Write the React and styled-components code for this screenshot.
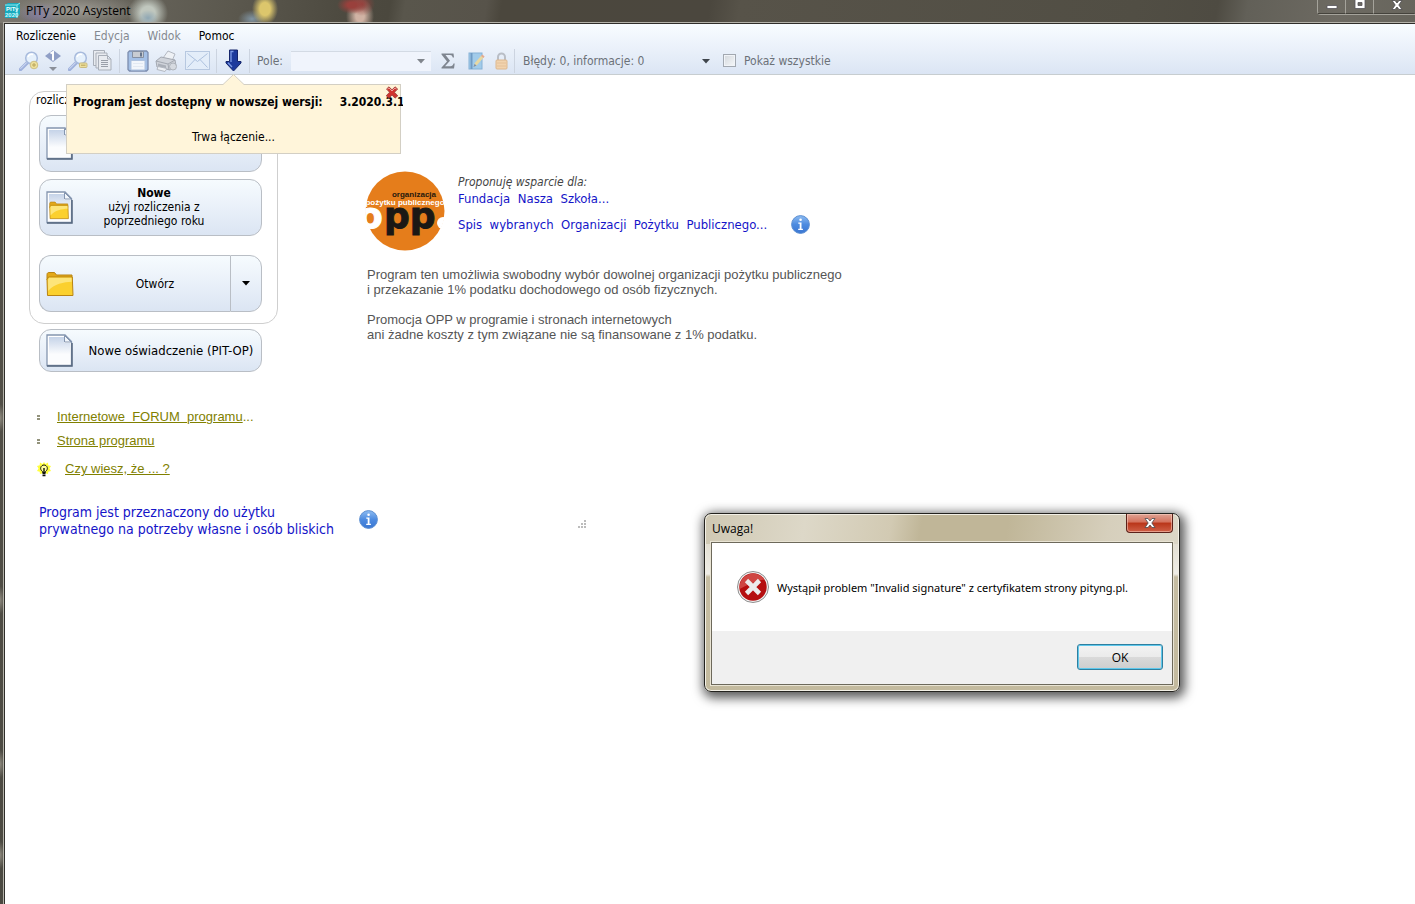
import React, { useState } from 'react';
import styled, { createGlobalStyle } from 'styled-components';

const UI_FONT = "'DejaVu Sans Condensed', 'DejaVu Sans', sans-serif";
const SYSTEM_FONT = "'Open Sans', 'Noto Sans', sans-serif";
const TEXT_FONT = "'Liberation Sans', Arial, sans-serif";

const GlobalStyle = createGlobalStyle`
	* { box-sizing: border-box; }
	body {
		margin: 0;
		background: #ffffff;
		font-family: ${UI_FONT};
		font-size: 12px;
		color: #000000;
	}
	button, select, input { font: inherit; color: inherit; margin: 0; }
	button { padding: 0; border: none; background: none; }
	svg { display: block; flex: none; }
`;

const Window = styled.div`
	display: flex;
	flex-direction: column;
	min-height: 100vh;
	position: relative;
	overflow: hidden;
	padding-left: 4px;
	background:
		radial-gradient(ellipse 5px 14px at 0 600px, #8d897e, transparent),
		radial-gradient(ellipse 5px 14px at 0 764px, #8d897e, transparent),
		radial-gradient(ellipse 5px 14px at 0 855px, #8d897e, transparent),
		radial-gradient(ellipse 5px 14px at 0 418px, #8d897e, transparent),
		linear-gradient(#6f6c64, #55524a 120px, #4b4941);
`;

const TitleBar = styled.header`
	display: flex;
	justify-content: space-between;
	height: 23px;
	margin-left: -4px;
	padding-left: 4px;
	background:
		radial-gradient(ellipse 64px 16px at 76px 10px, rgba(190, 188, 182, .6), transparent),
		radial-gradient(ellipse 22px 12px at 40px 14px, rgba(120, 110, 190, .6), transparent),
		radial-gradient(ellipse 10px 8px at 148px 18px, #8fa7b4, transparent),
		radial-gradient(ellipse 20px 19px at 148px 13px, #c0c7be 35%, transparent),
		radial-gradient(ellipse 13px 16px at 265px 9px, #dcc66c 40%, transparent),
		radial-gradient(ellipse 14px 9px at 252px 19px, #8195a3, transparent),
		radial-gradient(ellipse 15px 9px at 352px 5px, #99403c 30%, transparent),
		radial-gradient(ellipse 13px 12px at 362px 4px, #93423e, transparent),
		radial-gradient(ellipse 14px 18px at 360px 16px, #d0b3a4 30%, transparent),
		linear-gradient(100deg, #7b7870 0, #66635a 130px, #5b584e 230px, #4d4a40 340px, #4b483e 385px, #59564c 400px, #57534a 480px, #4b473d 495px, #4b473e 700px, #575349 730px, #514e44 1120px, #4e4b42 1200px, #626058 1230px, #6d6a62 1320px, #66645b 1415px);
`;

const AppTitle = styled.h1`
	display: flex;
	align-items: center;
	gap: 5px;
	margin: 0;
	height: 20px;
	font: 12px ${SYSTEM_FONT};
`;

const WindowButtons = styled.div`
	display: flex;
	height: 15px;
	border: 1px solid #a5a39b;
	border-width: 0 0 1px 1px;
	border-bottom-left-radius: 4px;
`;

const WindowButton = styled.button`
	display: flex;
	justify-content: center;
	width: ${({ $wide }) => ($wide ? 41 : 28)}px;
	padding-left: ${({ $wide }) => ($wide ? 6 : 0)}px;
	height: 14px;
	border-right: 1px solid ${({ $wide }) => ($wide ? 'transparent' : '#a5a39b')};
	border-bottom: 1px solid #45433c;
`;

const Client = styled.div`
	position: relative;
	flex: 1;
	display: flex;
	flex-direction: column;
	border: solid #2f2e2a;
	border-width: 1px 0 0 1px;
	outline: 1px solid #b4b2a9;
	background: #ffffff;
`;

const Bars = styled.div`
	height: 51px;
	border-bottom: 1px solid #c7cdd0;
	background: linear-gradient(#f8fdff, #edf3fb 40%, #dbe5f4);
`;

const MenuBar = styled.nav`
	display: flex;
	gap: 18px;
	height: 23px;
	padding-left: 11px;
	align-items: center;
`;

const MenuItem = styled.button`
	&:disabled { color: #84898f; }
`;

const ToolBar = styled.div`
	display: flex;
	align-items: center;
	height: 27px;
	padding-left: 11px;
	color: #6c7178;
`;

const Tool = styled.button`
	display: flex;
	align-items: center;
	justify-content: center;
	width: ${({ $width = 25 }) => $width}px;
	height: 25px;
`;

const Separator = styled.span`
	width: 1px;
	height: 24px;
	margin: 0 ${({ $gap = 3 }) => $gap}px;
	background: #ccd4e0;
`;

const FieldLabel = styled.label`
	display: flex;
	align-items: center;
	gap: 8px;
	padding-left: ${({ $left = 4 }) => $left}px;
`;

const SelectBox = styled.div`
	position: relative;
	width: ${({ $width }) => $width}px;
	margin-left: ${({ $gap = 0 }) => $gap}px;
	color: ${({ $dark }) => ($dark ? '#3f454c' : '#80858c')};

	> svg {
		position: absolute;
		right: 6px;
		top: 8px;
		pointer-events: none;
	}
`;

const Select = styled.select`
	display: block;
	appearance: none;
	width: 100%;
	height: 20px;
	padding: 0;
	opacity: 1;
	border: none;
	border-top: 1px solid ${({ $boxed }) => ($boxed ? '#d3dae4' : 'transparent')};
	background: ${({ $boxed }) => ($boxed ? '#f0f4fc' : 'transparent')};
	color: #6c7178;
`;

const Check = styled.input`
	appearance: none;
	width: 13px;
	height: 13px;
	border: 1px solid #a2a8b0;
	background: linear-gradient(135deg, #d3d7dc, #f6f8fa);
	box-shadow: inset 0 0 0 1px #f1f4f8;
`;

const Notice = styled.aside`
	position: absolute;
	z-index: 2;
	left: 61px;
	top: 60px;
	width: 335px;
	height: 70px;
	border: 1px solid #d3cfc4;
	background: #fff5da;

	> svg {
		position: absolute;
		left: 155px;
		top: -11px;
	}
`;

const NoticeTitle = styled.div`
	display: flex;
	gap: 17px;
	width: 330px;
	margin: 9px 0 0 6px;
	line-height: 16px;
	font-weight: bold;
	white-space: nowrap;
	overflow: hidden;
`;

const NoticeStatus = styled.p`
	margin: 19px 0 0;
	line-height: 16px;
	text-align: center;
`;

const NoticeClose = styled.button`
	position: absolute;
	right: 1px;
	top: 1px;
`;

const Main = styled.main`
	display: flex;
	flex-direction: column;
	padding: 16px 24px;
`;

const Columns = styled.div`
	display: flex;
	gap: 87px;
`;

const SideColumn = styled.div`
	flex: none;
	width: 249px;
`;

const Group = styled.fieldset`
	display: flex;
	flex-direction: column;
	gap: 7px;
	min-width: 0;
	margin: 0;
	height: 233px;
	padding: 0 15px 0 9px;
	border: 1px solid #cfcfcf;
	border-radius: 15px;
`;

const GroupTitle = styled.span`
	height: 16px;
	margin-left: -3px;
	line-height: 16px;
`;

const BigButton = styled.button`
	display: flex;
	align-items: center;
	width: 100%;
	height: ${({ $low }) => ($low ? 43 : 57)}px;
	padding: 0 6px;
	border: 1px solid #b9bec5;
	border-radius: 12px;
	background: linear-gradient(#f6fbfe, #e9f0f9 50%, #dbe5f3);
	font-size: ${({ $low }) => ($low ? 13 : 12)}px;
	line-height: 14px;

	strong { display: block; }
`;

const ButtonText = styled.span`
	flex: 1;
	padding: 0 ${({ $right = 0 }) => $right}px ${({ $right }) => ($right ? 2 : 0)}px ${({ $left = 0 }) => $left}px;
	text-align: center;
	white-space: nowrap;
`;

const SplitButton = styled.div`
	display: flex;
	margin-top: 12px;

	> button:first-child {
		border-radius: 12px 0 0 12px;
		border-right: none;
	}
	> button:last-child {
		flex: none;
		width: 32px;
		justify-content: center;
		border-radius: 0 12px 12px 0;
	}
`;

const SingleAction = styled.div`
	padding: 5px 16px 0 10px;
`;

const LinkList = styled.ul`
	display: flex;
	flex-direction: column;
	gap: 8px;
	margin: 37px 0 0;
	padding: 0 0 0 8px;
	list-style: none;
	font: 13px/16px ${TEXT_FONT};
	color: #808000;
	white-space: nowrap;
`;

const LinkItem = styled.li`
	display: flex;
	align-items: center;
	gap: ${({ $tip }) => ($tip ? 14 : 17)}px;
	margin-top: ${({ $tip }) => ($tip ? 4 : 0)}px;

	a { color: inherit; }
`;

const Support = styled.section`
	padding-top: 80px;
`;

const SupportHead = styled.div`
	display: flex;
	gap: 13px;
`;

const SupportLinks = styled.div`
	padding-top: 3px;
	font-size: 13px;
	line-height: 18px;

	em {
		display: block;
		font-size: 12px;
		line-height: 16px;
		color: #444444;
	}
	a { display: block; }
`;

const LinkRow = styled.div`
	display: flex;
	align-items: center;
	gap: 24px;
	margin-top: 7px;
`;

const BlueLink = styled.a`
	color: #1414c8;
	text-decoration: none;
`;

const Legal = styled.p`
	margin: 0 0 15px 2px;
	font: 13px/15px ${TEXT_FONT};
	color: #555555;

	&:first-of-type { margin-top: 16px; }
`;

const Footer = styled.footer`
	display: flex;
	gap: 34px;
	padding: 27px 0 0 10px;
	font-size: 14px;
	line-height: 17px;
	color: #1414c8;

	p { margin: 0; width: 286px; white-space: nowrap; }
	> svg { margin-top: 6px; }
	> svg:last-child { margin: 16px 0 0 166px; }
`;

const Dialog = styled.div`
	position: absolute;
	z-index: 3;
	left: 704px;
	top: 513px;
	width: 476px;
	padding: 0 6px 6px;
	border: 1px solid #24231f;
	border-radius: 7px;
	background:
		linear-gradient(100deg, #cfc8b3 0, #ddd8c8 100px, #d2cab3 185px, #c0b698 215px, #c0b698 300px, #d6cfbc 400px, #dcd7c7 100%) 0 0 / 100% 30px no-repeat,
		linear-gradient(#d8d2c1, #efede6 60px, #c6bda2 63px, #c3ba9e);
	box-shadow: inset 0 0 0 1px #f3f0e6, 2px 3px 11px 3px rgba(0, 0, 0, .65);
	font: 12px ${SYSTEM_FONT};
`;

const DialogBar = styled.div`
	display: flex;
	justify-content: space-between;
	height: 28px;

	h2 {
		margin: 7px 0 0 1px;
		font: inherit;
		line-height: 16px;
	}
`;

const DialogClose = styled.button`
	display: flex;
	align-items: center;
	justify-content: center;
	width: 47px;
	height: 19px;
	border: 1px solid #5b2119;
	border-top: none;
	border-radius: 0 0 4px 4px;
	background: linear-gradient(#dfa394, #d4715c 45%, #b93519 50%, #cf6047);
	box-shadow: inset 0 0 0 1px rgba(255, 220, 205, .5);
`;

const DialogBody = styled.div`
	border: 1px solid #6d695b;
	outline: 1px solid #e9e4d4;
	background: #ffffff;
`;

const DialogMessage = styled.div`
	display: flex;
	align-items: center;
	gap: 8px;
	height: 88px;
	padding-left: 25px;
	font: 11px 'Noto Sans', sans-serif;
	white-space: nowrap;
`;

const DialogFooter = styled.div`
	display: flex;
	justify-content: flex-end;
	height: 53px;
	padding: 13px 9px 0 0;
	background: #f0f0f0;
`;

const OkButton = styled.button`
	width: 86px;
	height: 26px;
	border: 1px solid #2f7f9f;
	border-radius: 3px;
	background: linear-gradient(#f3f3f3, #ebebeb 49%, #dadada 50%, #cecece);
	box-shadow: inset 0 0 0 1px #5fc8ec;
`;

const AppIcon = () => (
	<svg width="17" height="17" viewBox="0 0 17 17">
		<path d="M1 3l3-2h12v11l-3 4H1z" fill="#18a9bd" />
		<path d="M1 3h12v13M13 3l3-2" fill="none" stroke="#8ceaf2" />
		<text x="2" y="9" fontSize="6" fontWeight="bold" fill="#e9ffff" fontFamily="Liberation Sans">PITy</text>
		<text x="1" y="15" fontSize="6" fontWeight="bold" fill="#c9fbff" fontFamily="Liberation Sans">2020</text>
	</svg>
);

const Caret = () => (
	<svg width="8" height="5" viewBox="0 0 8 5"><path d="M0 0h8L4 4.500z" fill="currentColor" /></svg>
);

const MagnifierIcon = ({ minus }) => (
	<svg width="20" height="20" viewBox="0 0 20 20">
		<path d="M1.500 18.500l7-7" stroke="#9fb1dc" strokeWidth="3.400" strokeLinecap="round" />
		<path d="M1.500 17.800l6.500-6.500" stroke="#d9e2f6" strokeWidth="1" />
		<circle cx="12.500" cy="7" r="5.800" fill="#e6f1fc" stroke="#a8bbdd" strokeWidth="1.500" />
		<path d="M9 6a4 4 0 0 1 5-2.500" fill="none" stroke="#fff" strokeWidth="1.500" />
		{minus
			? <rect x="11.500" y="12" width="7.500" height="4.500" rx="1" fill="#eddf9c" stroke="#c9bb81" />
			: <circle cx="15" cy="14" r="3.800" fill="#eee09a" stroke="#cdbf84" />}
		<path d={minus ? 'M13 14.200h4.500' : 'M13 14h4M15 12v4'} stroke="#b9a45b" />
	</svg>
);

const ZoomResetIcon = () => (
	<svg width="16" height="22" viewBox="0 0 16 22">
		<path d="M8 0l8 6-8 6-8-6z" fill="#909fc6" />
		<path d="M5.500 3.500L8 2v8.500" fill="none" stroke="#fff" strokeWidth="2" />
		<path d="M4 17h8l-4 4z" fill="#8b9099" />
	</svg>
);

const PagesIcon = () => (
	<svg width="19" height="21" viewBox="0 0 19 21" fill="#e8ebf0" stroke="#a9afb9">
		<path d="M.5.500h11v15H.500z" />
		<path d="M3 3h11v15H3z" />
		<path d="M5.500 5.500h9l3.500 3.500v11H5.500zM14.500 5.500V9H18" />
		<path d="M8 10.500h7M8 12.500h7M8 14.500h7M8 16.500h7" stroke="#9a9fa8" />
	</svg>
);

const SaveIcon = () => (
	<svg width="22" height="22" viewBox="0 0 22 22">
		<path d="M2.500 1h17l1.500 1.500v17l-1.500 1.500h-17L1 19.500v-17z" fill="#a4c0e6" stroke="#7c8dae" strokeWidth="1.300" />
		<path d="M5.500 1.500h11v6h-11z" fill="#c8ccd2" stroke="#8590a2" />
		<path d="M13 2.500h2v4h-2z" fill="#66758c" />
		<path d="M4 10.500h14V20H4z" fill="#f2f6fb" stroke="#afc3df" />
		<path d="M6 13.500h10M6 16.500h10" stroke="#e2e9f2" />
	</svg>
);

const PrinterIcon = () => (
	<svg width="23" height="22" viewBox="0 0 23 22" strokeLinejoin="round">
		<path d="M8 8l5-7 7 3-3 7z" fill="#eef1f5" stroke="#b3b8c1" />
		<path d="M1 11l5-4 14 3 1 6-6 4-13-3z" fill="#cfd3da" stroke="#a3a8b1" />
		<path d="M1 11l12 3 7-4M13 14l1 6" fill="none" stroke="#a3a8b1" />
		<path d="M3 13.500l8 2v3l-8-2z" fill="#aaafb8" />
		<path d="M3 16.500l-1 3 8 2 2-3z" fill="#eef1f5" stroke="#b3b8c1" />
		<circle cx="18" cy="16.500" r="3.500" fill="#d6dae0" stroke="#aeb3bb" />
	</svg>
);

const MailIcon = () => (
	<svg width="25" height="19" viewBox="0 0 25 19" fill="none">
		<rect x=".5" y=".5" width="24" height="18" fill="#e3edf9" stroke="#b7c8e0" />
		<path d="M2.500 2.500l10 8 10-8M2.500 16.500l7.500-8M22.500 16.500l-7.500-8" stroke="#adc1de" />
	</svg>
);

const DownloadIcon = () => (
	<svg width="17" height="23" viewBox="0 0 17 23">
		<path d="M4.500 1h8v11.500H16V14l-7.500 8L1 14v-1.500h3.500z" fill="#1d3a9c" stroke="#15256b" />
		<path d="M6 13V2.500h2.500M3 13.800l4 4.200" fill="none" stroke="#7d9be6" strokeWidth="1.300" />
	</svg>
);

const SigmaIcon = () => (
	<svg width="14" height="16" viewBox="0 0 14 16">
		<path d="M.5.500h12l.5 4h-1.200C11.300 2.800 10.500 2 9 2H4.500l4.500 5.700L4 13.200h5.500c1.600 0 2.500-.9 3-2.700h1.200l-.7 5H.500v-1L6 8.500.500 1.500z" fill="#7e858f" />
	</svg>
);

const NotebookIcon = () => (
	<svg width="17" height="18" viewBox="0 0 17 18">
		<rect x="1" y="1" width="13" height="16" fill="#a1cbea" stroke="#86b2d6" />
		<path d="M3.500 1v16" stroke="#6f9bc5" strokeWidth="2" />
		<path d="M14.500 4.500l-7 8" stroke="#e7d8a2" strokeWidth="3" />
		<path d="M5.500 15l1-3 2 1.500z" fill="#8a8f96" />
		<path d="M15.500 3.500l-1.300 1.500" stroke="#e5aa8f" strokeWidth="3" />
	</svg>
);

const LockIcon = () => (
	<svg width="13" height="18" viewBox="0 0 13 18">
		<path d="M3 9V5a3.500 3.500 0 0 1 7 0v4" fill="none" stroke="#b9bec6" strokeWidth="2" />
		<rect x="1" y="8" width="11" height="9" rx="1" fill="#f1d3ae" stroke="#dcb78e" />
		<path d="M2 11h9M2 14h9" stroke="#e5c098" />
	</svg>
);

const FolderShape = () => (
	<>
		<path d="M1 3.500C1 2 2 1.500 3 1.500h5.500L10.500 4H26v5H1z" fill="#e3a819" stroke="#b98413" />
		<path d="M1 8.500L2.500 6h23.800L27 24.500H1.500z" fill="#fbd02e" stroke="#b98413" />
		<path d="M2 9l1-2.200h22.500l.2 4C18 11 8 13 2.200 20z" fill="#fde57a" />
	</>
);

const FolderIcon = () => (
	<svg width="28" height="26" viewBox="0 0 28 26"><FolderShape /></svg>
);

const DocumentIcon = ({ withFolder }) => (
	<svg width="27" height="33" viewBox="0 0 27 33">
		<defs>
			<linearGradient id="paper" x1="0" y1="0" x2="0" y2="1">
				<stop offset="0" stopColor="#c5d3e8" />
				<stop offset=".65" stopColor="#fbfcfe" />
			</linearGradient>
		</defs>
		<path d="M1 1h18l6.500 6.500V31.500H1z" fill="#fff" stroke="#8495af" strokeWidth="1.300" />
		<path d="M3 3h15v6h6v20.500H3z" fill="url(#paper)" />
		<path d="M18.500 1.500v6.500h6.500z" fill="#f2f6fb" stroke="#8495af" />
		<path d="M1 32h25V9" fill="none" stroke="#56677f" strokeWidth="1.500" />
		{withFolder && <g transform="translate(3 10) scale(.72)"><FolderShape /></g>}
	</svg>
);

const InfoIcon = () => (
	<svg width="19" height="19" viewBox="0 0 19 19">
		<defs>
			<linearGradient id="info" x1="0" y1="0" x2="0" y2="1">
				<stop offset="0" stopColor="#8dbcf2" />
				<stop offset=".5" stopColor="#4d8be0" />
				<stop offset="1" stopColor="#3a76d2" />
			</linearGradient>
		</defs>
		<circle cx="9.500" cy="9.500" r="8.900" fill="url(#info)" stroke="#5c8fd2" />
		<circle cx="9.600" cy="4.700" r="1.300" fill="#fff" />
		<path d="M7.300 7.500h3.200v6.300h1.400V15H7.200v-1.200h1.500V8.700H7.300z" fill="#fff" />
	</svg>
);

const BulbIcon = () => (
	<svg width="14" height="15" viewBox="0 0 14 15">
		<path d="M7 0l1.500 2L11 .500l.3 2.700L14 4l-1.500 2.500L14 9l-2.700.7L11 12 7 11l-4 1-.3-2.300L0 9l1.500-2.500L0 4l2.700-.8L3 .500 5.500 2z" fill="#ffff3c" />
		<path d="M5.500 9.500C2 7 4 3 7 3s5 4 1.500 6.500v1h-3z" fill="#ffff9a" stroke="#111" />
		<path d="M5.500 11.500h3M5.500 13.500h3M7 6v5" stroke="#111" strokeWidth="1.400" />
	</svg>
);

const OppLogo = () => (
	<svg width="80" height="80" viewBox="0 0 80 80" role="img" aria-label="opp">
		<defs><clipPath id="opp"><circle cx="40" cy="40" r="40" /></clipPath></defs>
		<circle cx="40" cy="40" r="39.500" fill="#e57d1b" />
		<g clipPath="url(#opp)" fontFamily="Liberation Sans" fontWeight="bold">
			<text x="71" y="26" fontSize="8" textAnchor="end" fill="#26190d">organizacja</text>
			<text x="40" y="34" fontSize="8" textAnchor="middle" fill="#ffffff">pożytku publicznego</text>
			<g fontFamily="DejaVu Sans" fontSize="36" strokeWidth="1">
				<text x="-7" y="57" fill="#ffffff" stroke="#ffffff">o</text>
				<text x="19" y="57" fill="#1b1815" stroke="#1b1815">pp</text>
			</g>
			<circle cx="78" cy="52" r="6" fill="#ffffff" />
		</g>
	</svg>
);

const ErrorIcon = () => (
	<svg width="32" height="32" viewBox="0 0 32 32">
		<circle cx="16" cy="16" r="15.500" fill="#f2f2f2" stroke="#8e8e8e" />
		<circle cx="16" cy="16" r="13.700" fill="#b50f10" />
		<path d="M2.600 18A13.700 13.700 0 0 1 27.500 8.500C22 9 12 13 2.600 18z" fill="#cf4643" />
		<path d="M9.500 9.500l13 13M22.500 9.500l-13 13" stroke="#ececec" strokeWidth="4.600" />
	</svg>
);

const CrossIcon = () => (
	<svg width="14" height="13" viewBox="0 0 14 13">
		<path d="M1.500 3L4 .800l3 3 3-3L12.700 3 9.500 6.300l3.300 3.500L10 12.200 7 9l-3 3.200-2.800-2.400 3.300-3.500z" fill="#d0342f" stroke="#8f3a35" strokeWidth=".7" />
		<path d="M2.500 3L4 2l3 3 3-3 1.500 1" fill="none" stroke="#f0a09b" />
	</svg>
);

const WhiteCross = () => (
	<svg width="12" height="10" viewBox="0 0 12 10">
		<path d="M1 .500h3l2 2.500 2-2.500h3L7.800 5 11 9.500H8L6 7 4 9.500H1L4.200 5z" fill="#fff" stroke="#4d4b4f" strokeWidth=".8" />
	</svg>
);

const BulletIcon = () => (
	<svg width="3" height="5" viewBox="0 0 3 5"><path d="M0 0h3v2H0zM0 3h3v2H0z" fill="#93937c" /></svg>
);

const GripIcon = () => (
	<svg width="9" height="9" viewBox="0 0 9 9">
		<path d="M6 0h2v2H6zM3 3h2v2H3zM6 3h2v2H6zM0 6h2v2H0zM3 6h2v2H3zM6 6h2v2H6z" fill="#bcbcbc" />
	</svg>
);

const NoticePointer = () => (
	<svg width="24" height="12" viewBox="0 0 24 12">
		<path d="M0 12L1 10.500 11.500.500 22 10.500l1 1.500z" fill="#fff5da" />
		<path d="M0 10.500h1L11.500.500 22 10.500h1" fill="none" stroke="#d3cfc4" />
	</svg>
);

const MENU = [
	{ label: 'Rozliczenie' },
	{ label: 'Edycja', disabled: true },
	{ label: 'Widok', disabled: true },
	{ label: 'Pomoc' }
];

const UpdateNotice = ({ onClose }) => (
	<Notice>
		<NoticePointer />
		<NoticeTitle>
			<span>Program jest dostępny w nowszej wersji:</span>
			<span>3.2020.3.1</span>
		</NoticeTitle>
		<NoticeStatus>Trwa łączenie...</NoticeStatus>
		<NoticeClose aria-label="Zamknij powiadomienie" onClick={onClose}><CrossIcon /></NoticeClose>
	</Notice>
);

const ErrorDialog = ({ onClose }) => (
	<Dialog role="dialog" aria-labelledby="dialog-title">
		<DialogBar>
			<h2 id="dialog-title">Uwaga!</h2>
			<DialogClose aria-label="Zamknij" onClick={onClose}><WhiteCross /></DialogClose>
		</DialogBar>
		<DialogBody>
			<DialogMessage>
				<ErrorIcon />
				<span>Wystąpił problem "Invalid signature" z certyfikatem strony pityng.pl.</span>
			</DialogMessage>
			<DialogFooter><OkButton onClick={onClose}>OK</OkButton></DialogFooter>
		</DialogBody>
	</Dialog>
);

const App = () => {
	const [noticeOpen, setNoticeOpen] = useState(true);
	const [dialogOpen, setDialogOpen] = useState(true);
	const [showAll, setShowAll] = useState(false);

	return (
		<Window>
			<GlobalStyle />
			<TitleBar>
				<AppTitle><AppIcon />PITy 2020 Asystent</AppTitle>
				<WindowButtons>
					<WindowButton aria-label="Minimalizuj">
						<svg width="12" height="10" viewBox="0 0 12 10"><path d="M1 5.500h10v3H1z" fill="#fff" stroke="#55535a" strokeWidth=".8" /></svg>
					</WindowButton>
					<WindowButton aria-label="Maksymalizuj">
						<svg width="12" height="10" viewBox="0 0 12 10"><path d="M1-1h10v9.500H1zM4 2.500v3h4v-3z" fill="#fff" fillRule="evenodd" stroke="#55535a" strokeWidth=".8" /></svg>
					</WindowButton>
					<WindowButton $wide aria-label="Zamknij program"><WhiteCross /></WindowButton>
				</WindowButtons>
			</TitleBar>
			<Client>
				<Bars>
					<MenuBar>
						{MENU.map(({ label, disabled }) => (
							<MenuItem key={label} disabled={disabled}>{label}</MenuItem>
						))}
					</MenuBar>
					<ToolBar>
						<Tool aria-label="Powiększ"><MagnifierIcon /></Tool>
						<Tool aria-label="Rozmiar 1:1" $width={24}><ZoomResetIcon /></Tool>
						<Tool aria-label="Pomniejsz"><MagnifierIcon minus /></Tool>
						<Tool aria-label="Formularze"><PagesIcon /></Tool>
						<Separator $gap={4} />
						<Tool aria-label="Zapisz" $width={27}><SaveIcon /></Tool>
						<Tool aria-label="Drukuj" $width={31}><PrinterIcon /></Tool>
						<Tool aria-label="Wyślij" $width={31}><MailIcon /></Tool>
						<Separator />
						<Tool aria-label="Aktualizacja" $width={26}><DownloadIcon /></Tool>
						<Separator />
						<FieldLabel>
							Pole:
							<SelectBox $width={140}>
								<Select $boxed disabled />
								<Caret />
							</SelectBox>
						</FieldLabel>
						<Tool aria-label="Suma" $width={34}><SigmaIcon /></Tool>
						<Tool aria-label="Notatki" $width={24}><NotebookIcon /></Tool>
						<Tool aria-label="Zablokuj"><LockIcon /></Tool>
						<Separator $gap={0} />
						<SelectBox $width={193} $gap={8} $dark>
							<Select aria-label="Błędy i informacje">
								<option>Błędy: 0, informacje: 0</option>
							</Select>
							<Caret />
						</SelectBox>
						<FieldLabel $left={7}>
							<Check type="checkbox" checked={showAll} onChange={() => setShowAll(!showAll)} />
							Pokaż wszystkie
						</FieldLabel>
					</ToolBar>
				</Bars>
				{noticeOpen && <UpdateNotice onClose={() => setNoticeOpen(false)} />}
				<Main>
					<Columns>
						<SideColumn>
							<Group>
								<GroupTitle>rozliczenie</GroupTitle>
								<BigButton aria-label="Nowe"><DocumentIcon /></BigButton>
								<BigButton>
									<DocumentIcon withFolder />
									<ButtonText $right={20}>
										<strong>Nowe</strong>
										użyj rozliczenia z<br />poprzedniego roku
									</ButtonText>
								</BigButton>
								<SplitButton>
									<BigButton><FolderIcon /><ButtonText $left={12}>Otwórz</ButtonText></BigButton>
									<BigButton aria-label="Ostatnio otwierane"><Caret /></BigButton>
								</SplitButton>
							</Group>
							<SingleAction>
								<BigButton $low><DocumentIcon /><ButtonText $left={14}>Nowe oświadczenie (PIT-OP)</ButtonText></BigButton>
							</SingleAction>
							<LinkList>
								<LinkItem><BulletIcon /><span><a href="#forum">Internetowe&nbsp; FORUM&nbsp; programu</a>...</span></LinkItem>
								<LinkItem><BulletIcon /><a href="#strona">Strona programu</a></LinkItem>
								<LinkItem $tip><BulbIcon /><a href="#porady">Czy wiesz, że ... ?</a></LinkItem>
							</LinkList>
						</SideColumn>
						<Support>
							<SupportHead>
								<OppLogo />
								<SupportLinks>
									<em>Proponuję wsparcie dla:</em>
									<BlueLink href="#fundacja">Fundacja&nbsp; Nasza&nbsp; Szkoła...</BlueLink>
									<LinkRow>
										<BlueLink href="#opp">Spis&nbsp; wybranych&nbsp; Organizacji&nbsp; Pożytku&nbsp; Publicznego...</BlueLink>
										<InfoIcon />
									</LinkRow>
								</SupportLinks>
							</SupportHead>
							<Legal>
								Program ten umożliwia swobodny wybór dowolnej organizacji pożytku publicznego<br />
								i przekazanie 1% podatku dochodowego od osób fizycznych.
							</Legal>
							<Legal>
								Promocja OPP w programie i stronach internetowych<br />
								ani żadne koszty z tym związane nie są finansowane z 1% podatku.
							</Legal>
						</Support>
					</Columns>
					<Footer>
						<p>Program jest przeznaczony do użytku<br />prywatnego na potrzeby własne i osób bliskich</p>
						<InfoIcon />
						<GripIcon />
					</Footer>
				</Main>
			</Client>
			{dialogOpen && <ErrorDialog onClose={() => setDialogOpen(false)} />}
		</Window>
	);
};

export default App;
